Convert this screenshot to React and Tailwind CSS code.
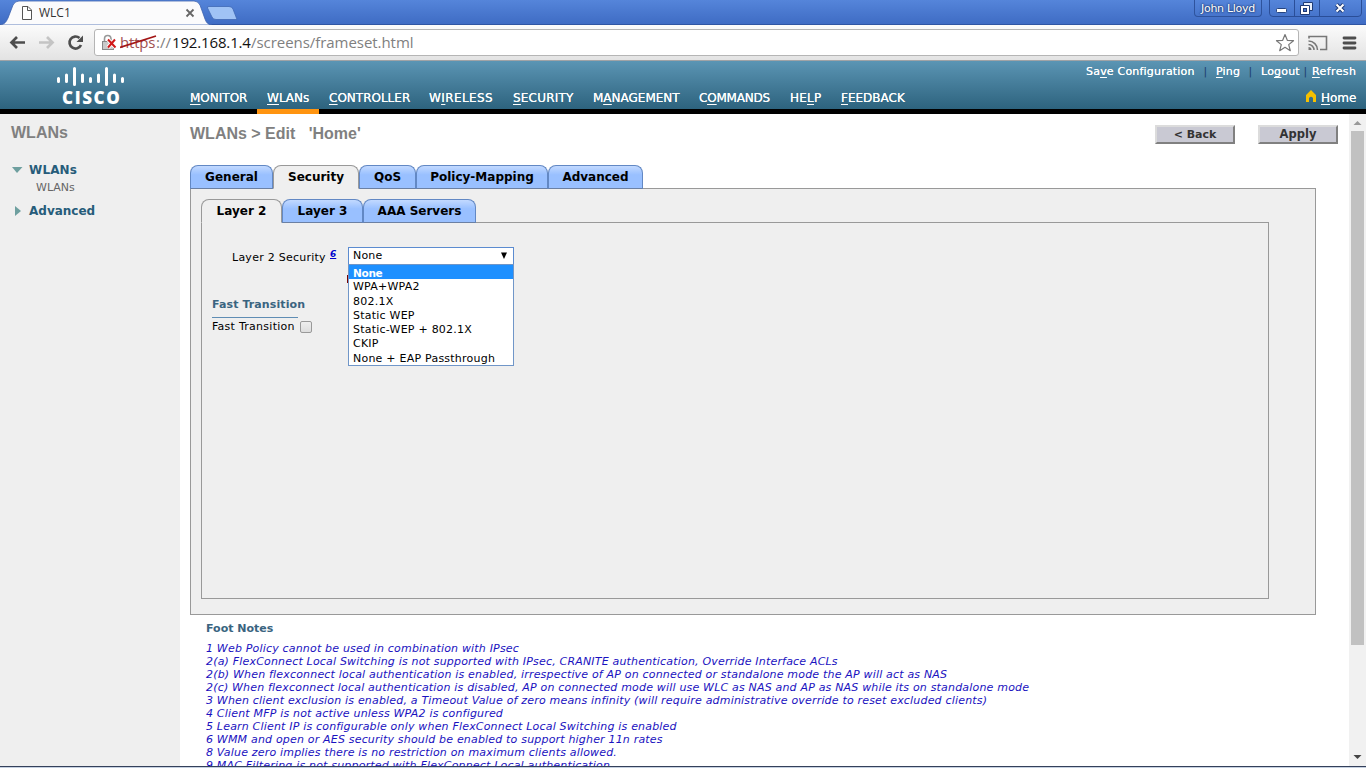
import React from "react";

const navItems = [
  { pre: "", key: "M", post: "ONITOR", width: "w-[57px]" },
  { pre: "", key: "W", post: "LANs", width: "w-[42px]", active: true },
  { pre: "", key: "C", post: "ONTROLLER", width: "w-[80px]" },
  { pre: "W", key: "I", post: "RELESS", width: "w-[64px]", tracking: "tracking-[0.4px]" },
  { pre: "", key: "S", post: "ECURITY", width: "w-[60px]", tracking: "tracking-[0.2px]" },
  { pre: "M", key: "A", post: "NAGEMENT", width: "w-[86px]" },
  { pre: "C", key: "O", post: "MMANDS", width: "w-[71px]", tracking: "tracking-[-0.2px]" },
  { pre: "HE", key: "L", post: "P", width: "w-[31px]", tracking: "tracking-[0.2px]" },
  { pre: "", key: "F", post: "EEDBACK", width: "w-[64px]" },
];

const mainTabs = [
  { label: "General", width: "w-[83px]" },
  { label: "Security", width: "w-[86px]", active: true },
  { label: "QoS", width: "w-[57px]" },
  { label: "Policy-Mapping", width: "w-[132px]" },
  { label: "Advanced", width: "w-[95px]" },
];

const layerTabs = [
  { label: "Layer 2", width: "w-[81px]", active: true },
  { label: "Layer 3", width: "w-[81px]" },
  { label: "AAA Servers", width: "w-[113px]" },
];

const securityOptions = [
  "None",
  "WPA+WPA2",
  "802.1X",
  "Static WEP",
  "Static-WEP + 802.1X",
  "CKIP",
  "None + EAP Passthrough",
];

const footNotes = [
  "1 Web Policy cannot be used in combination with IPsec",
  "2(a) FlexConnect Local Switching is not supported with IPsec, CRANITE authentication, Override Interface ACLs",
  "2(b) When flexconnect local authentication is enabled, irrespective of AP on connected or standalone mode the AP will act as NAS",
  "2(c) When flexconnect local authentication is disabled, AP on connected mode will use WLC as NAS and AP as NAS while its on standalone mode",
  "3 When client exclusion is enabled, a Timeout Value of zero means infinity (will require administrative override to reset excluded clients)",
  "4 Client MFP is not active unless WPA2 is configured",
  "5 Learn Client IP is configurable only when FlexConnect Local Switching is enabled",
  "6 WMM and open or AES security should be enabled to support higher 11n rates",
  "8 Value zero implies there is no restriction on maximum clients allowed.",
  "9 MAC Filtering is not supported with FlexConnect Local authentication",
];

const HotKey = ({ pre, k, post }) => (
  <>
    {pre}
    <span className="underline underline-offset-2">{k}</span>
    {post}
  </>
);

const TitleBar = () => (
  <div className="flex h-[25px] justify-between border-b border-[#2f55a3] bg-linear-to-b from-[#5585da] to-[#3f6cc4]">
    <div className="relative h-[25px] w-[240px]">
      <svg className="absolute left-0 top-0" width="240" height="25" viewBox="0 0 240 25">
        <path d="M0 25 C5 24 6 22 8 18 L13 5 Q15 1 19 1 H194 Q198 1 200 5 L205 19 Q207 25 212 25 Z" fill="#fbfbfc" stroke="#3c62ae" strokeWidth="0.8" />
        <path d="M209 6.500 H229 Q232 6.500 233 9 L237 19.500 H216 Q213 19.500 212 17 L207.500 8 Q207 6.500 209 6.500 Z" fill="#a0c3f5" stroke="#4068b4" strokeWidth="0.8" />
        <path d="M22.500 6.500 H28 L31.500 10 V19.500 H22.500 Z M27.500 6.500 V10.500 H31.500" fill="#fff" stroke="#555" />
        <path d="M186.500 9.500 L193.500 16.500 M193.500 9.500 L186.500 16.500" stroke="#666" strokeWidth="1.800" />
      </svg>
      <span className="absolute left-[39px] top-[5px] font-['Open_Sans','Noto_Sans',sans-serif] text-[12px] leading-[16px] text-[#333]">WLC1</span>
    </div>
    <div className="flex h-[17px] pr-1 text-white">
      <div className="mr-[7px] flex w-[68px] items-center justify-center rounded-b border border-t-0 border-[#2e539d] pt-[2px] text-[11px] tracking-[-0.300px] [text-shadow:0_0_2px_#1a3468,0_0_2px_#1a3468]">
        John Lloyd
      </div>
      <svg width="93" height="17" viewBox="0 0 93 17" fill="none">
        <path d="M0.500 0 V13 Q0.500 16.500 4 16.500 H89 Q92.500 16.500 92.500 13 V0 M25.500 0 V16 M50.500 0 V16" stroke="#2a4e98" />
        <rect x="7.500" y="8.500" width="10" height="4" rx="1" fill="#fff" stroke="#26447f" />
        <path d="M34.500 2.500 H43.500 V10.500 H34.500 Z" fill="#e8effb" stroke="#1f3b75" />
        <path d="M31.500 5.500 H40.500 V14.500 H31.500 Z" fill="#fff" stroke="#1f3b75" />
        <rect x="34.500" y="8.500" width="3" height="3" fill="#4a76cc" stroke="#1f3b75" />
        <path d="M67.500 4.500 L74.500 11.500 M74.500 4.500 L67.500 11.500" stroke="#1f3b75" strokeWidth="4" />
        <path d="M67.500 4.500 L74.500 11.500 M74.500 4.500 L67.500 11.500" stroke="#fff" strokeWidth="2" />
      </svg>
    </div>
  </div>
);

const Toolbar = () => (
  <div className="flex h-9 items-center border-b border-[#a0a3a6] bg-linear-to-b from-[#fbfbfb] to-[#e3e3e3] pl-[9px]">
    <svg width="76" height="20" viewBox="0 0 76 20" fill="none">
      <path d="M16 9.500 H3 M8 4 L2.500 9.500 L8 15" stroke="#4d4d4d" strokeWidth="2.700" />
      <path d="M30 9.500 H43 M38 4 L43.500 9.500 L38 15" stroke="#c4c4c4" strokeWidth="2.700" />
      <path d="M72 12 A6 6 0 1 1 70.500 5" stroke="#4d4d4d" strokeWidth="2.700" />
      <path d="M74 2.500 V9 H67.500 Z" fill="#4d4d4d" />
    </svg>
    <div className="ml-[9px] flex h-[27px] w-[1205px] items-center rounded-[3px] border border-[#b5b5b5] bg-white pl-[7px]">
      <svg className="shrink-0" width="16" height="18" viewBox="0 0 16 18" fill="none">
        <path d="M2.500 8 V5 Q2.500 1.500 5.700 1.500 Q9 1.500 9 5 V8" stroke="#999" strokeWidth="1.600" />
        <rect x="0.500" y="7.500" width="11" height="8" fill="#c9c9c9" stroke="#888" />
        <path d="M6 5.500 L13.500 13.500 M13 5.500 L6 13.500" stroke="#fff" strokeWidth="4" />
        <path d="M6 5.500 L13.500 13.500 M13 5.500 L6 13.500" stroke="#d01818" strokeWidth="2" />
      </svg>
      <div className="relative -top-px ml-0.5 flex whitespace-nowrap font-['Open_Sans','Noto_Sans',sans-serif] text-[15px] leading-[20px] text-[#808080]">
        <span className="w-9 tracking-[-0.2px] text-[#a05050]">https</span>
        <span className="w-4">://</span>
        <span className="w-[79px] tracking-[-0.150px] text-[#111]">192.168.1.4</span>
        <span className="tracking-[-0.050px]">/screens/frameset.html</span>
        <svg className="absolute left-0 top-[3px]" width="38" height="14" viewBox="0 0 38 14">
          <path d="M0 12.500 L36 1" stroke="#a31515" strokeWidth="1.800" />
        </svg>
      </div>
      <svg className="ml-auto mr-[3px]" width="20" height="20" viewBox="0 0 20 20" fill="none">
        <path d="M10 1.500 L12.300 7.300 L18.500 7.700 L13.700 11.600 L15.300 17.700 L10 14.300 L4.700 17.700 L6.300 11.600 L1.500 7.700 L7.700 7.300 Z" stroke="#777" strokeWidth="1.200" strokeLinejoin="round" />
      </svg>
    </div>
    <svg className="ml-[9px]" width="50" height="18" viewBox="0 0 50 18" fill="none">
      <path d="M1 4.500 V2.500 H18.500 V15.500 H12" stroke="#777" strokeWidth="1.600" />
      <path d="M0.500 7 A9 9 0 0 1 9.500 16 M0.500 10.500 A5.500 5.500 0 0 1 6 16" stroke="#777" strokeWidth="1.500" />
      <path d="M0.500 13 A3 3 0 0 1 3.500 16 H0.500 Z" fill="#777" />
      <path d="M36 4 H47 M36 9 H47 M36 14 H47" stroke="#4d4d4d" strokeWidth="2.800" strokeLinecap="round" />
    </svg>
  </div>
);

const CiscoLogo = () => (
  <div className="ml-[56px] w-[134px] pt-[5px]">
    <svg width="70" height="21" viewBox="0 0 70 21">
      <g stroke="#fff" strokeWidth="3" strokeLinecap="round">
        <path d="M2.500 12.500 V15.500 M10.500 9 V15.500 M18.500 2.500 V18.500 M26.500 9 V15.500 M34.500 12.500 V15.500 M42.500 9 V15.500 M50.500 2.500 V18.500 M58.500 9 V15.500 M66.500 12.500 V15.500" />
      </g>
    </svg>
    <div className="mt-px ml-[6px] font-['Open_Sans',sans-serif] text-[17px] font-extrabold leading-[20px] tracking-[1.600px]">CISCO</div>
  </div>
);

const Header = () => (
  <div className="flex h-[53px] border-b-[5px] border-black bg-linear-to-b from-[#5b95b4] to-[#2d637e] text-white">
    <CiscoLogo />
    <div className="flex gap-5 text-[12px] [text-shadow:0_0_0.5px_#fff]">
      {navItems.map((item) => (
        <div key={item.key + item.post} className={`relative flex h-[53px] items-start whitespace-nowrap pt-[29px] leading-[16px] ${item.width} ${item.tracking || ""}`}>
          <span>
            <HotKey pre={item.pre} k={item.key} post={item.post} />
          </span>
          {item.active && <span className="absolute -left-2.5 bottom-0 h-[5px] w-[62px] bg-[#ff9410]" />}
        </div>
      ))}
    </div>
    <div className="ml-auto flex flex-col items-end pr-[10px] pt-[3px]">
      <div className="flex whitespace-nowrap text-[11px] leading-[16px] tracking-[0.200px] [text-shadow:0_0_0.5px_#fff]">
        <span className="w-[109px]"><HotKey pre="Sa" k="v" post="e Configuration" /></span>
        <span className="w-[21px] text-center text-[#1d3f6e] [text-shadow:none]">|</span>
        <span className="w-6"><HotKey pre="" k="P" post="ing" /></span>
        <span className="w-[21px] text-center text-[#1d3f6e] [text-shadow:none]">|</span>
        <span className="w-[38px]"><HotKey pre="Lo" k="g" post="out" /></span>
        <span className="w-[13px] text-center text-[#1d3f6e] [text-shadow:none]">|</span>
        <span className="w-[44px] tracking-[0.400px]"><HotKey pre="" k="R" post="efresh" /></span>
      </div>
      <div className="mt-[10px] flex items-center gap-1 text-[12px] leading-[16px] [text-shadow:0_0_0.5px_#fff]">
        <svg className="-mt-1" width="12" height="13" viewBox="0 0 12 13">
          <path d="M6 0 L11 5 V12 H8 V8 Q6 5.500 4 8 V12 H1 V5 Z" fill="#f5c000" />
        </svg>
        <span className="w-[35px]"><HotKey pre="" k="H" post="ome" /></span>
      </div>
    </div>
  </div>
);

const Sidebar = () => (
  <div className="w-[180px] shrink-0 bg-[#efefef] pl-[11px] pt-[9px]">
    <h2 className="font-['Liberation_Sans',Arial,sans-serif] text-[16px] font-bold leading-[20px] text-[#808080]">WLANs</h2>
    <div className="mt-[18px] flex items-center text-[12px] font-bold leading-[18px] tracking-[0.150px] text-[#265c7a]">
      <svg width="18" height="10" viewBox="0 0 18 10"><path d="M1 2 H11.500 L6 8 Z" fill="#6e9f9f" /></svg>
      WLANs
    </div>
    <div className="ml-[25px] text-[11px] leading-[17px] text-[#666]">WLANs</div>
    <div className="mt-[6px] flex items-center text-[12px] font-bold leading-[18px] text-[#265c7a]">
      <svg width="18" height="12" viewBox="0 0 18 12"><path d="M4 1 L10 6 L4 11 Z" fill="#6e9f9f" /></svg>
      Advanced
    </div>
  </div>
);

const TabRow = ({ tabs }) => (
  <div className="relative -mb-px flex text-[12px] font-bold leading-[15px] text-black">
    {tabs.map((tab) => (
      <div
        key={tab.label}
        className={`flex h-6 justify-center whitespace-nowrap rounded-t-[8px] border pt-[4px] ${tab.width} ${
          tab.active
            ? "border-[#999] border-b-[#efefef] bg-[#efefef]"
            : "border-[#6288c4] border-b-[#6b80a3] bg-linear-to-b from-[#c2d9ff] via-[#99c0ff] via-40% to-[#99c0ff]"
        }`}
      >
        {tab.label}
      </div>
    ))}
  </div>
);

const PushButton = ({ className, children }) => (
  <div className={`flex h-[19px] w-20 items-center justify-center border-2 border-b-[#808080] border-l-[#dcdcdc] border-r-[#808080] border-t-[#dcdcdc] bg-[#c9c9d3] font-bold text-[#333] ${className}`}>
    {children}
  </div>
);

const SecuritySelect = () => (
  <div className="relative w-[166px] text-[11px] text-black">
    <div className="flex h-[18px] items-center justify-between border border-[#5b8bd0] bg-white pl-1 pr-[5px]">
      <span className="pt-px tracking-[0.2px]">None</span>
      <svg width="8" height="8" viewBox="0 0 8 8"><path d="M1 0.500 H7 L4 7 Z" fill="#000" /></svg>
    </div>
    {/* edge of the red note hidden behind the list */}
    <span className="absolute -left-px top-[28px] h-2 w-px bg-[#7a0000]" />
    <div className="absolute left-0 top-[17px] w-[166px] border border-[#7096c8] bg-white">
      {securityOptions.map((option, i) => (
        <div
          key={option}
          className={`h-[14.300px] whitespace-nowrap pl-1 pt-px leading-[14.300px] ${i === 0 ? "bg-[#1e90ff] text-[10.500px] font-bold tracking-[-0.300px] text-white" : "tracking-[0.230px]"}`}
        >
          {option}
        </div>
      ))}
    </div>
  </div>
);

const SecurityPanel = () => (
  <div className="h-[427px] w-[1126px] border border-[#999] bg-[#efefef] pl-[10px] pt-[10px]">
    <TabRow tabs={layerTabs} />
    <div className="h-[377px] w-[1068px] border border-[#999] pl-[10px] pt-[24px] text-[11px] text-black">
      <div className="flex">
        <div className="flex w-[136px] whitespace-nowrap pl-5">
          <span className="w-[98px] pt-[3px] leading-[16px] tracking-[0.250px]">Layer 2 Security</span>
          <a className="text-[9px] font-bold italic leading-[14px] text-[#0000cc] underline">6</a>
        </div>
        <SecuritySelect />
      </div>
      <div className="mt-[31px] font-bold leading-[16px] tracking-[0.100px] text-[#3a6480]">Fast Transition</div>
      <div className="mt-[4px] h-px w-[86px] bg-[#5f8db4]" />
      <div className="flex items-center leading-[16px]">
        <span className="w-[88px] pt-px tracking-[0.270px]">Fast Transition</span>
        <span className="h-3 w-3 rounded-[2px] border border-[#999] bg-linear-to-b from-[#eee] to-[#ddd]" />
      </div>
    </div>
  </div>
);

const Scrollbar = () => (
  <div className="flex w-[17px] shrink-0 flex-col items-center bg-[#f1f1f1]">
    <svg width="17" height="17" viewBox="0 0 17 17"><path d="M4.500 11 L8.500 7 L12.500 11 Z" fill="#999" /></svg>
    <div className="h-[514px] w-[13px] bg-[#c1c1c1]" />
    <svg className="mt-auto" width="17" height="17" viewBox="0 0 17 17"><path d="M4.500 6 H12.500 L8.500 10 Z" fill="#444" /></svg>
  </div>
);

const App = () => {
  return (
    <div className="flex h-[768px] w-[1366px] flex-col overflow-hidden bg-white font-['DejaVu_Sans',Verdana,sans-serif]">
      <TitleBar />
      <Toolbar />
      <Header />
      <div className="flex h-[652px] overflow-hidden">
        <Sidebar />
        <div className="flex-1 overflow-hidden pl-[10px]">
          <div className="flex h-[51px] items-start justify-between pr-[11px] pt-[10px]">
            <h1 className="whitespace-pre font-['Liberation_Sans',Arial,sans-serif] text-[16px] font-bold leading-[20px] text-[#808080]">
              {"WLANs > Edit   'Home'"}
            </h1>
            <div className="flex gap-[23px] pt-px">
              <PushButton className="pt-px text-[11px]">&lt; Back</PushButton>
              <PushButton className="pt-px text-[11.500px]">Apply</PushButton>
            </div>
          </div>
          <TabRow tabs={mainTabs} />
          <SecurityPanel />
          <div className="pl-4 pt-[6px] text-[11px]">
            <div className="font-bold leading-[16px] text-[#3a6480]">Foot Notes</div>
            <div className="mt-[5px] whitespace-nowrap italic leading-[13px] tracking-[0.185px] text-[#1a12c0]">
              {footNotes.map((note) => (
                <div key={note}>{note}</div>
              ))}
            </div>
          </div>
        </div>
        <Scrollbar />
      </div>
      <div className="h-px bg-[#34405a]" />
      <div className="h-px bg-[#c5d0e0]" />
    </div>
  );
};

export default App;
